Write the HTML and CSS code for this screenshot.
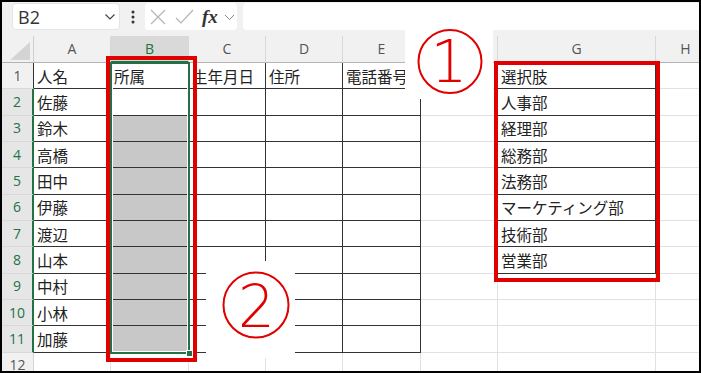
FILE: index.html
```html
<!DOCTYPE html>
<html lang="ja">
<head>
    <meta charset="UTF-8">
    <title>入力規則</title>
    <link rel="stylesheet" href="styles.css">
</head>
<body>
    <div class="window">
        <header class="toolbar">
            <div class="namebox">
                <span>B2</span>
                <svg width="10" height="6" viewBox="0 0 10 6"><polyline points="0.5,0.5 5,5 9.5,0.5" fill="none" stroke="#444" stroke-width="1.2"/></svg>
            </div>
            <div class="more">
                <svg width="4" height="14" viewBox="0 0 4 14"><circle cx="2" cy="2" r="1.5" fill="#333"/><circle cx="2" cy="7" r="1.5" fill="#333"/><circle cx="2" cy="12" r="1.5" fill="#333"/></svg>
            </div>
            <div class="fxbox">
                <svg width="92" height="27" viewBox="0 0 92 27">
                    <path d="M6 7 L20 21 M20 7 L6 21" stroke="#b4b4b4" stroke-width="1.2" fill="none"/>
                    <polyline points="31,15 36,20 48,7" stroke="#b4b4b4" stroke-width="1.2" fill="none"/>
                    <text x="57" y="20" class="fx">fx</text>
                    <polyline points="80,12 84.5,16.5 89,12" stroke="#888" stroke-width="1" fill="none"/>
                </svg>
            </div>
            <div class="formula"></div>
        </header>

        <table class="grid">
            <colgroup>
                <col class="c-rh"><col class="c-77"><col class="c-78"><col class="c-77"><col class="c-77"><col class="c-78"><col class="c-77"><col class="c-g"><col class="c-h">
            </colgroup>
            <thead>
                <tr>
                    <th class="corner"><span class="tri"></span></th>
                    <th>A</th><th class="selc">B</th><th>C</th><th>D</th><th>E</th><th></th><th>G</th><th>H</th>
                </tr>
            </thead>
            <tbody>
                <tr><th class="rh edge">1</th><td class="d">人名</td><td class="d">所属</td><td class="d">生年月日</td><td class="d">住所</td><td class="d">電話番号</td><td class="fg"></td><td class="d">選択肢</td><td></td></tr>
                <tr><th class="rh sel">2</th><td class="d">佐藤</td><td class="d"></td><td class="d"></td><td class="d"></td><td class="d"></td><td class="fg"></td><td class="d">人事部</td><td></td></tr>
                <tr><th class="rh sel">3</th><td class="d">鈴木</td><td class="d fill"></td><td class="d"></td><td class="d"></td><td class="d"></td><td class="fg"></td><td class="d">経理部</td><td></td></tr>
                <tr><th class="rh sel">4</th><td class="d">高橋</td><td class="d fill"></td><td class="d"></td><td class="d"></td><td class="d"></td><td class="fg"></td><td class="d">総務部</td><td></td></tr>
                <tr><th class="rh sel">5</th><td class="d">田中</td><td class="d fill"></td><td class="d"></td><td class="d"></td><td class="d"></td><td class="fg"></td><td class="d">法務部</td><td></td></tr>
                <tr><th class="rh sel">6</th><td class="d">伊藤</td><td class="d fill"></td><td class="d"></td><td class="d"></td><td class="d"></td><td class="fg"></td><td class="d">マーケティング部</td><td></td></tr>
                <tr><th class="rh sel">7</th><td class="d">渡辺</td><td class="d fill"></td><td class="d"></td><td class="d"></td><td class="d"></td><td class="fg"></td><td class="d">技術部</td><td></td></tr>
                <tr><th class="rh sel">8</th><td class="d">山本</td><td class="d fill"></td><td class="d"></td><td class="d"></td><td class="d"></td><td class="fg"></td><td class="d">営業部</td><td></td></tr>
                <tr><th class="rh sel">9</th><td class="d">中村</td><td class="d fill"></td><td class="d"></td><td class="d"></td><td class="d"></td><td></td><td></td><td></td></tr>
                <tr><th class="rh sel">10</th><td class="d">小林</td><td class="d fill"></td><td class="d"></td><td class="d"></td><td class="d"></td><td></td><td></td><td></td></tr>
                <tr><th class="rh sel">11</th><td class="d">加藤</td><td class="d fill"></td><td class="d"></td><td class="d"></td><td class="d"></td><td></td><td></td><td></td></tr>
                <tr><th class="rh">12</th><td></td><td></td><td></td><td></td><td></td><td></td><td></td><td></td></tr>
            </tbody>
        </table>

        <!-- selection and annotations -->
        <div class="selection"><span class="handle"></span></div>
        <div class="mark mark-b"></div>
        <div class="mark mark-g"></div>
        <div class="note note-1">
            <svg width="88" height="71" viewBox="0 0 88 71">
                <circle cx="45" cy="33.5" r="31.5" class="ring"/>
                <text x="44" y="54" class="num">1</text>
            </svg>
        </div>
        <div class="note note-2">
            <svg width="89" height="97" viewBox="0 0 89 97">
                <circle cx="50" cy="44" r="32.5" class="ring"/>
                <text x="50.5" y="66" class="num">2</text>
            </svg>
        </div>
    </div>
</body>
</html>
```

FILE: styles.css
```css
* {
    margin: 0;
    padding: 0;
    box-sizing: border-box;
}
body {
    width: 701px;
    height: 373px;
    overflow: hidden;
    background: #fff;
    font-family: "Noto Sans CJK JP", sans-serif;
}
.window {
    position: relative;
    width: 701px;
    height: 373px;
    border: 2px solid #000;
    overflow: hidden;
    background: #f1f1f1;
}
.toolbar {
    display: flex;
    align-items: flex-start;
    height: 34px;
    padding: 1px 0 0 10px;
}
.namebox {
    display: flex;
    align-items: center;
    justify-content: space-between;
    width: 108px;
    height: 27px;
    padding: 0 4px 0 5px;
    background: #fff;
    border: 1px solid #e4e4e4;
    border-radius: 4px;
    font-family: "Open Sans", sans-serif;
    font-size: 18px;
    color: #333;
}
.more {
    display: flex;
    justify-content: center;
    align-items: center;
    width: 25px;
    height: 27px;
}
.fxbox {
    width: 92px;
    height: 27px;
    background: #fff;
    border-radius: 4px;
}
.fxbox svg {
    display: block;
}
.fx {
    font-family: "Liberation Serif", serif;
    font-style: italic;
    font-weight: bold;
    font-size: 19px;
    fill: #333;
}
.formula {
    flex: 1;
    height: 27px;
    margin-left: 6px;
    background: #fff;
    border-radius: 4px 0 0 4px;
}
.grid {
    width: 714px;
    table-layout: fixed;
    border-collapse: separate;
    border-spacing: 0;
}
.c-rh { width: 32px; }
.c-77 { width: 77px; }
.c-78 { width: 78px; }
.c-g { width: 158px; }
.c-h { width: 60px; }
.grid th,
.grid td {
    height: 26.33px;
    padding: 0 3px;
    border-right: 1px solid #e1e1e1;
    border-bottom: 1px solid #e1e1e1;
    background: #fff;
    font-size: 15.5px;
    line-height: 20px;
    font-weight: normal;
    color: #222;
    text-align: left;
    white-space: nowrap;
    overflow: hidden;
}
.grid thead th {
    height: 27px;
    background: #f1f1f1;
    border-right-color: #d8d8d8;
    border-bottom-color: #b4b4b4;
    font-family: "Open Sans", sans-serif;
    font-size: 14px;
    color: #555;
    text-align: center;
}
.grid thead th.selc {
    background: #d9d9d9;
    color: #217346;
    border-bottom: 2px solid #217346;
}
.grid thead th.corner {
    position: relative;
    border-right-color: #d0d0d0;
}
.tri {
    position: absolute;
    right: 3px;
    bottom: 2px;
    width: 0;
    height: 0;
    border-left: 20px solid transparent;
    border-bottom: 18px solid #d4d4d4;
}
.grid .rh {
    padding: 0;
    background: #f1f1f1;
    border-right-color: #d4d4d4;
    border-bottom-color: #d8d8d8;
    font-family: "Open Sans", sans-serif;
    font-size: 14px;
    color: #555;
    text-align: center;
}
.grid .rh.edge {
    border-right-color: #333;
}
.grid .rh.sel {
    background: #e6e6e6;
    color: #217346;
    border-right: 2px solid #217346;
}
.grid td.d {
    border-right-color: #333;
    border-bottom-color: #333;
}
.grid td.fg {
    border-right-color: #333;
}
.grid td.fill {
    background: #c8c8c8;
}
.selection {
    position: absolute;
    left: 108px;
    top: 60px;
    width: 80px;
    height: 292px;
    border: 2px solid #217346;
    box-shadow: inset 0 0 0 1px #fff;
}
.handle {
    position: absolute;
    right: -5px;
    bottom: -5px;
    width: 7px;
    height: 7px;
    background: #217346;
    border: 1px solid #fff;
}
.mark {
    position: absolute;
    border: 4px solid #e00000;
}
.mark-b {
    left: 104px;
    top: 54px;
    width: 91px;
    height: 306px;
}
.mark-g {
    left: 492px;
    top: 59px;
    width: 166px;
    height: 221px;
}
.note {
    position: absolute;
    background: #fff;
}
.note svg {
    display: block;
}
.note-1 {
    left: 403px;
    top: 26px;
    width: 88px;
    height: 71px;
}
.note-2 {
    left: 204px;
    top: 259px;
    width: 89px;
    height: 97px;
}
.ring {
    fill: none;
    stroke: #e00000;
    stroke-width: 2;
}
.num {
    font-family: "DejaVu Sans", sans-serif;
    font-weight: 200;
    font-size: 58px;
    fill: #e00000;
    text-anchor: middle;
}
```
